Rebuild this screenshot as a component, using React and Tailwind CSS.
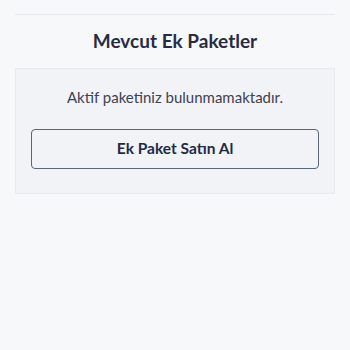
import React from 'react'

const App = () => {
  return (
    <div className='w-[350px] h-[350px] bg-[#f7f8fa] px-[15px] pt-[14px]' style={{ fontFamily: 'Lato, "Noto Sans", sans-serif' }}>
      <div className='border-t border-[#e6e8ec]'>
        <h2 className='h-[53px] flex items-center justify-center text-[19px] font-bold text-[#272c42]'>Mevcut Ek Paketler</h2>
      </div>
      <div className='border border-[#e8eaee] bg-[#f1f3f6] px-[15px] pt-[15px] pb-[24px] flex flex-col items-center'>
        <p className='text-[15px] text-[#3d4252] leading-[26px]'>Aktif paketiniz bulunmamaktadır.</p>
        <button type='button' className='mt-[19px] w-full h-[40px] rounded-[4px] border-[1.5px] border-[#5b6578] text-[15.5px] font-bold text-[#1e2b48]'>
          Ek Paket Satın Al
        </button>
      </div>
    </div>
  )
}

export default App
